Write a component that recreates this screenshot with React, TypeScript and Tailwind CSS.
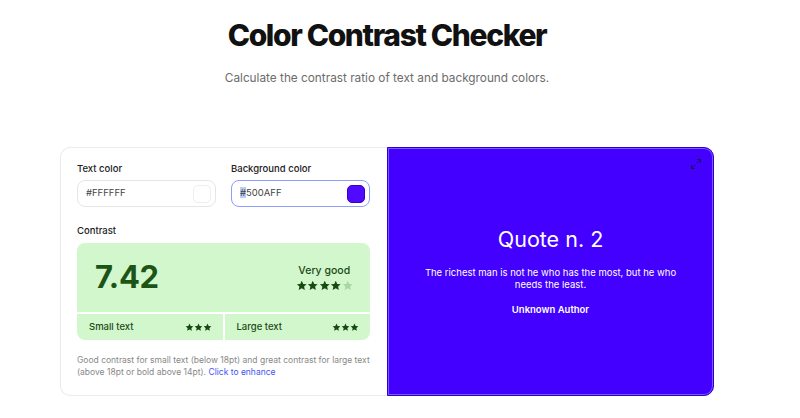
import React from "react";

const Star = ({ className }: { className: string }) => (
  <svg viewBox="0 0 24 24" className={className} fill="currentColor">
    <path d="M12 1.5l3.1 6.6 7.1.8-5.3 4.9 1.5 7.1L12 17.3l-6.4 3.6 1.5-7.1-5.3-4.9 7.1-.8z" />
  </svg>
);

export default function App() {
  return (
    <div className="w-[800px] h-[418px] bg-white overflow-hidden" style={{ fontFamily: "Inter, 'Noto Sans', sans-serif" }}>
      <div className="ml-[60px] w-[654px] flex flex-col items-center">
        <h1 className="mt-[17px] text-[30px] leading-[36px] font-extrabold tracking-[-0.045em] text-[#111111]">
          Color Contrast Checker
        </h1>
        <p className="mt-[17px] text-[11.8px] leading-[16px] text-[#6b6b6b]">
          Calculate the contrast ratio of text and background colors.
        </p>

        <div className="mt-[61px] w-full h-[249px] flex">
          {/* Left panel */}
          <div className="w-[327px] bg-white border border-[#ebebeb] border-r-0 rounded-l-[10px] px-[16px] pt-[15px]">
            <div className="flex gap-[15px]">
              <div className="flex flex-col w-[139px]">
                <span className="text-[9.5px] leading-[12px] font-medium text-[#222]">Text color</span>
                <div className="mt-[5px] h-[27px] rounded-[8px] border border-[#e6e6e6] flex items-center justify-between pl-[8px] pr-[4px]">
                  <span className="text-[9.5px] text-[#444]">#FFFFFF</span>
                  <span className="w-[18px] h-[18px] rounded-[5px] border border-[#eeeeee] bg-white" />
                </div>
              </div>
              <div className="flex flex-col w-[139px]">
                <span className="text-[9.5px] leading-[12px] font-medium text-[#222]">Background color</span>
                <div className="mt-[5px] h-[27px] rounded-[8px] border border-[#8e9cff] flex items-center justify-between pl-[8px] pr-[4px]">
                  <span className="text-[9.5px] text-[#444]">
                    <span className="bg-[#b9cdf9]">#</span>500AFF
                  </span>
                  <span className="w-[18px] h-[18px] rounded-[5px] bg-[#500AFF] border border-[#3a00c8]" />
                </div>
              </div>
            </div>

            <div className="mt-[18px] text-[9.5px] leading-[12px] font-medium text-[#222]">Contrast</div>

            <div className="mt-[6px] w-[293px] rounded-[8px] bg-[#d3f7cc] overflow-hidden">
              <div className="h-[69px] flex items-center justify-between pl-[18px] pr-[17px]">
                <span className="text-[31px] font-bold text-[#1c5416] tracking-[-0.01em]">7.42</span>
                <div className="flex flex-col items-center">
                  <span className="text-[10.5px] leading-[14px] font-medium text-[#1c4a16]">Very good</span>
                  <div className="mt-[2px] flex">
                    <Star className="w-[11.5px] h-[11.5px] text-[#174a12]" />
                    <Star className="w-[11.5px] h-[11.5px] text-[#174a12]" />
                    <Star className="w-[11.5px] h-[11.5px] text-[#174a12]" />
                    <Star className="w-[11.5px] h-[11.5px] text-[#174a12]" />
                    <Star className="w-[11.5px] h-[11.5px] text-[#a8d8a2]" />
                  </div>
                </div>
              </div>
              <div className="h-[2px] bg-white" />
              <div className="h-[26px] flex">
                <div className="flex-1 flex items-center justify-between pl-[12px] pr-[11px]">
                  <span className="text-[9.5px] font-medium text-[#1c4a16]">Small text</span>
                  <div className="flex">
                    <Star className="w-[9px] h-[9px] text-[#174a12]" />
                    <Star className="w-[9px] h-[9px] text-[#174a12]" />
                    <Star className="w-[9px] h-[9px] text-[#174a12]" />
                  </div>
                </div>
                <div className="w-[2px] bg-white" />
                <div className="flex-1 flex items-center justify-between pl-[12px] pr-[11px]">
                  <span className="text-[9.5px] font-medium text-[#1c4a16]">Large text</span>
                  <div className="flex">
                    <Star className="w-[9px] h-[9px] text-[#174a12]" />
                    <Star className="w-[9px] h-[9px] text-[#174a12]" />
                    <Star className="w-[9px] h-[9px] text-[#174a12]" />
                  </div>
                </div>
              </div>
            </div>

            <p className="mt-[14px] w-[300px] text-[8.5px] leading-[12px] text-[#888888]">
              Good contrast for small text (below 18pt) and great contrast for large text
              <br />
              (above 18pt or bold above 14pt). <span className="text-[#3f56f5]">Click to enhance</span>
            </p>
          </div>

          {/* Right panel */}
          <div className="relative w-[327px] bg-[#4400ff] border border-[#2a00d0] rounded-r-[10px] shadow-[inset_0_0_0_1px_#7a5cff] flex flex-col items-center justify-center text-white">
            <svg className="absolute top-[10px] right-[11px] w-[12px] h-[12px]" viewBox="0 0 24 24" fill="none" stroke="#1a1650" strokeWidth="2" strokeLinecap="round" strokeLinejoin="round">
              <polyline points="15 3 21 3 21 9" />
              <polyline points="9 21 3 21 3 15" />
              <line x1="21" y1="3" x2="14" y2="10" />
              <line x1="3" y1="21" x2="10" y2="14" />
            </svg>
            <div className="-mt-[2px] text-[21.5px] leading-[26px]">Quote n. 2</div>
            <p className="mt-[15px] w-[260px] text-center text-[9.5px] leading-[12px]">
              The richest man is not he who has the most, but he who needs the least.
            </p>
            <div className="mt-[13px] text-[9.5px] leading-[12px] font-semibold">Unknown Author</div>
          </div>
        </div>
      </div>
    </div>
  );
}
